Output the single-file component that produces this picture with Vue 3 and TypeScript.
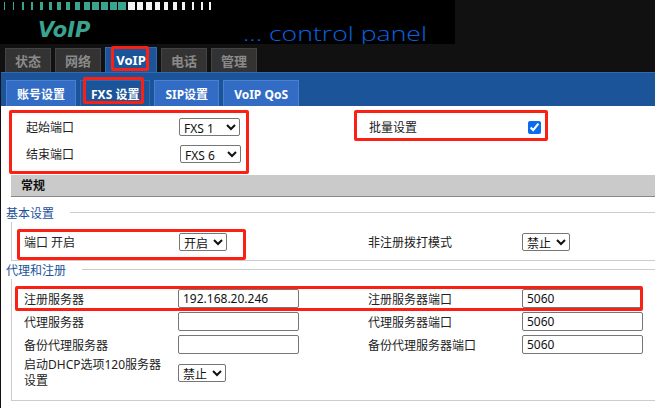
<script setup lang="ts">
const bars = [
  [4, 1], [13, 1], [22, 2], [31, 2], [40, 3], [49, 3], [57, 4], [66, 4], [75, 5], [84, 6], [92, 7], [101, 7], [110, 7], [118, 8],
  [128, 7], [137, 6], [146, 6], [155, 5], [164, 4], [173, 4], [182, 3], [192, 2], [201, 2], [209, 2],
]
const tabs = ['状态', '网络', 'VoIP', '电话', '管理']
const subTabs = ['账号设置', 'FXS 设置', 'SIP设置', 'VoIP QoS']

const servers = [
  { label: '注册服务器', value: '192.168.20.246', portLabel: '注册服务器端口' },
  { label: '代理服务器', value: '', portLabel: '代理服务器端口' },
  { label: '备份代理服务器', value: '', portLabel: '备份代理服务器端口' },
]

// red annotation boxes drawn on top of the screenshot: x, y, w, h
const marks = [
  [111, 46, 38, 25],
  [83, 77, 61, 27],
  [9, 110, 240, 64],
  [354, 110, 194, 31],
  [17, 229, 229, 31],
  [15, 286, 628, 25],
]
</script>

<template>
  <div class="page">
    <header class="banner">
      <svg width="455" height="44" viewBox="0 0 455 44">
        <rect
          v-for="(b, i) in bars"
          :key="i"
          :x="b[0]"
          y="2"
          :width="b[1]"
          height="8"
          :fill="i < 14 ? '#3aa48f' : '#f4f4f4'"
        />
        <text x="38" y="37" class="logo">VoIP</text>
        <text x="243" y="41" class="tagline" textLength="184" lengthAdjust="spacingAndGlyphs">... control panel</text>
      </svg>
    </header>

    <nav class="tabs">
      <a v-for="t in tabs" :key="t" class="tab" :class="{ 'tab--active': t === 'VoIP' }">{{ t }}</a>
    </nav>

    <nav class="subnav">
      <a v-for="s in subTabs" :key="s" class="subtab" :class="{ 'subtab--active': s === 'FXS 设置' }">{{ s }}</a>
    </nav>

    <main class="content">
      <div class="ports">
        <span class="ports__label">起始端口</span>
        <select class="select select--fxs"><option>FXS 1</option></select>
        <span>批量设置</span>
        <input class="check" type="checkbox" checked />

        <span class="ports__label">结束端口</span>
        <select class="select select--fxs select--end"><option>FXS 6</option></select>
      </div>

      <h2 class="bar">常规</h2>

      <section class="group">
        <div class="group__legend">基本设置</div>
        <div class="group__body group__body--basic">
          <span>端口 开启</span>
          <select class="select select--small select--nudge"><option>开启</option></select>
          <span>非注册拨打模式</span>
          <select class="select select--small"><option>禁止</option></select>
        </div>
      </section>

      <section class="group group--proxy">
        <div class="group__legend">代理和注册</div>
        <div class="group__body group__body--proxy">
          <template v-for="s in servers" :key="s.label">
            <span>{{ s.label }}</span>
            <input class="input" type="text" :value="s.value" />
            <span>{{ s.portLabel }}</span>
            <input class="input" type="text" value="5060" />
          </template>
          <span class="group__wrap">启动DHCP选项120服务器设置</span>
          <select class="select select--small"><option>禁止</option></select>
        </div>
      </section>
    </main>

    <div
      v-for="(m, i) in marks"
      :key="i"
      class="mark"
      :style="{ left: m[0] + 'px', top: m[1] + 'px', width: m[2] + 'px', height: m[3] + 'px' }"
    ></div>
  </div>
</template>

<style>
html,
body {
  margin: 0;
  background: #111;
}
</style>

<style scoped>
.page {
  position: relative;
  width: 655px;
  height: 408px;
  overflow: hidden;
  background: #111;
  font-family: "Noto Sans", "Noto Sans CJK SC", sans-serif;
  font-size: 12px;
  color: #222;
}

.banner {
  width: 455px;
  height: 44px;
  background: #000;
}

.banner svg {
  display: block;
}

.logo {
  font-family: "DejaVu Sans", sans-serif;
  font-size: 21px;
  font-style: italic;
  font-weight: 700;
  fill: #3aa48f;
}

.tagline {
  font-family: "Open Sans", sans-serif;
  font-size: 21px;
  font-weight: 300;
  fill: #0a62e0;
}

.tabs {
  display: flex;
  gap: 4px;
  align-items: flex-end;
  height: 28px;
  padding-left: 5px;
}

.tab {
  width: 44px;
  height: 23px;
  border: 1px solid #444;
  border-bottom: 0;
  background: #333;
  color: #8a8a8a;
  font-size: 13px;
  font-weight: 700;
  line-height: 24px;
  text-align: center;
}

.tab--active {
  width: 50px;
  height: 24px;
  border-color: #2f69b8;
  background: #1b5499;
  color: #fff;
}

.subnav {
  display: flex;
  gap: 4px;
  align-items: flex-end;
  height: 33px;
  margin-left: 1px;
  padding-left: 5px;
  border-top: 1px solid #2f69b8;
  background: #1b5499;
}

.subtab {
  height: 25px;
  padding: 0 10px;
  border: 1px solid #4a80cc;
  border-bottom: 0;
  background: #326cc4;
  color: #fff;
  font-size: 12px;
  font-weight: 700;
  line-height: 27px;
}

.subtab--active {
  background: #1b5499;
  border-color: #2f69b8;
}

.content {
  height: 302px;
  margin-left: 1px;
  background: #fff;
}

.ports {
  display: grid;
  grid-template-columns: 153px 190px 159px auto;
  grid-auto-rows: 18px;
  row-gap: 9px;
  align-items: center;
  justify-items: start;
  height: 69px;
  padding: 12px 0 0 25px;
  box-sizing: border-box;
}

.ports__label {
  grid-column: 1;
}

.check {
  width: 13px;
  height: 13px;
  margin: 0;
  accent-color: #0b6cf0;
}

.bar {
  height: 21px;
  margin: 0 0 0 10px;
  padding-left: 10px;
  border-bottom: 1px solid #888;
  background: #cacaca;
  color: #111;
  font-size: 12px;
  font-weight: 700;
  line-height: 22px;
}

.group {
  margin-top: 9px;
  margin-left: 5px;
}

.group--proxy {
  margin-top: 2px;
}

.group__legend {
  display: flex;
  align-items: center;
  gap: 16px;
  height: 16px;
  color: #1b5499;
  line-height: 16px;
}

.group__legend::after {
  content: "";
  flex: 1;
  height: 1px;
  margin-top: -4px;
  background: #ccc;
}

.group__body {
  display: grid;
  grid-template-columns: 154px 190px 154px auto;
  align-items: center;
  justify-items: start;
  margin-left: 5px;
  padding-left: 12px;
  border-left: 1px solid #ccc;
  border-bottom: 1px solid #ccc;
}

.group__body--basic {
  height: 39px;
  padding-top: 1px;
  box-sizing: border-box;
}

.group__body--proxy {
  grid-auto-rows: 19px;
  row-gap: 4px;
  height: 122px;
  padding-top: 10px;
  box-sizing: border-box;
}

.group__wrap {
  width: 146px;
  margin-top: 11px;
  line-height: 16px;
}

.group__body--proxy select {
  margin-top: 11px;
}

.select {
  height: 18px;
  padding: 0;
  border: 1px solid #767676;
  border-radius: 2px;
  background: #fff;
  color: #111;
  font: inherit;
  font-size: 12px;
}

.select--fxs {
  width: 61px;
}

.select--end {
  margin-left: 1px;
}

.select--small {
  width: 48px;
}

.select--nudge {
  margin-left: 1px;
}

.input {
  width: 121px;
  height: 19px;
  padding: 0 4px;
  box-sizing: border-box;
  border: 1px solid #767676;
  border-radius: 2px;
  color: #111;
  font: inherit;
}

.mark {
  position: absolute;
  box-sizing: border-box;
  border: 3px solid #fa2014;
  border-radius: 2px;
  pointer-events: none;
}
</style>
